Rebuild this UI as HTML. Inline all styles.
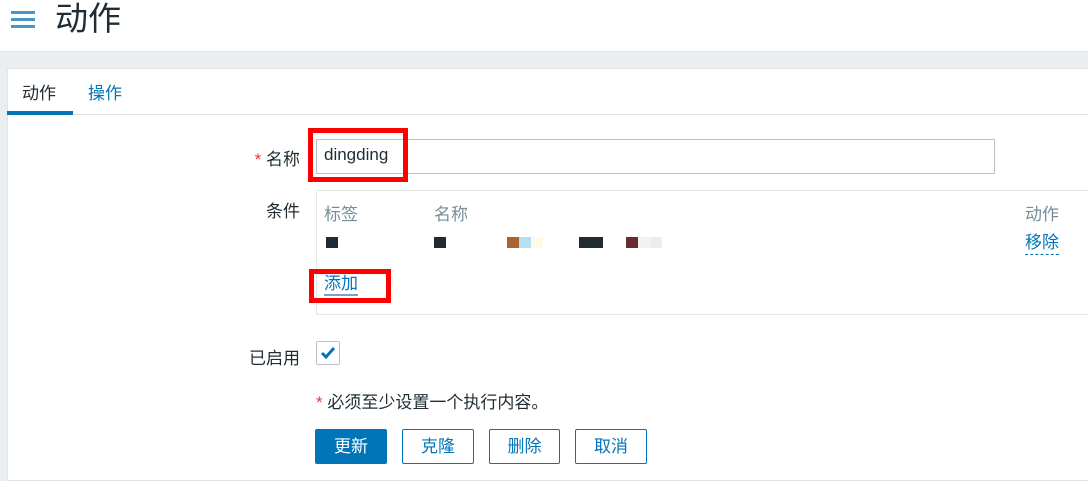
<!DOCTYPE html>
<html><head><meta charset="utf-8"><style>
*{margin:0;padding:0;box-sizing:border-box}
body{width:1088px;height:481px;overflow:hidden;background:#ebeef0;font-family:"Liberation Sans","Noto Sans CJK SC",sans-serif;color:#1f2c33;position:relative}
.a{position:absolute}
.hdr{left:0;top:0;width:1088px;height:52px;background:#fff;border-bottom:1px solid #dfe4e7}
.panel{left:7px;top:68px;width:1081px;height:413px;background:#fff;border:1px solid #dfe4e7;border-right:none}
.lbl{font-size:17px;text-align:right;width:100px}
.btn{top:429px;height:35px;border:1px solid #0275b8;color:#0275b8;font-size:17px;text-align:center;line-height:33px;border-radius:2px;background:#fff}
.red{border:5px solid #f00}
.sq{width:12px;height:11px}
</style></head><body>
<div class="a hdr"></div>
<div class="a" style="left:11px;top:11px;width:24px;height:3px;background:#4796c4"></div>
<div class="a" style="left:11px;top:18px;width:24px;height:3px;background:#4796c4"></div>
<div class="a" style="left:11px;top:25px;width:24px;height:3px;background:#4796c4"></div>
<div class="a" style="left:55px;top:-1px;font-size:33px;line-height:40px">动作</div>
<div class="a panel"></div>
<div class="a" style="left:8px;top:114px;width:1080px;height:1px;background:#dfe4e7"></div>
<div class="a" style="left:7px;top:111px;width:66px;height:4px;background:#0275b8"></div>
<div class="a" style="left:22px;top:79px;font-size:17px">动作</div>
<div class="a" style="left:88px;top:79px;font-size:17px;color:#0275b8">操作</div>

<div class="a lbl" style="left:200px;top:145px"><span style="color:#e33">*</span> 名称</div>
<div class="a" style="left:316px;top:139px;width:679px;height:35px;border:1px solid #b8c3c9"></div>
<div class="a" style="left:324px;top:145px;font-size:17px">dingding</div>
<div class="a red" style="left:308px;top:128px;width:100px;height:54px"></div>

<div class="a lbl" style="left:200px;top:197px">条件</div>
<div class="a" style="left:316px;top:190px;width:772px;height:125px;border:1px solid #e3e7ea;border-right:none"></div>
<div class="a" style="left:324px;top:200px;font-size:17px;color:#768d99">标签</div>
<div class="a" style="left:434px;top:200px;font-size:17px;color:#768d99">名称</div>
<div class="a" style="left:1025px;top:200px;font-size:17px;color:#768d99">动作</div>
<div class="a sq" style="left:326px;top:237px;background:#1f2c33"></div>
<div class="a sq" style="left:434px;top:237px;background:#1f2c33"></div>
<div class="a sq" style="left:507px;top:237px;background:#a86431"></div>
<div class="a sq" style="left:519px;top:237px;background:#b3e0f5"></div>
<div class="a sq" style="left:531px;top:237px;background:#fbfbe8"></div>
<div class="a" style="left:579px;top:237px;width:24px;height:11px;background:#1f2c33"></div>
<div class="a sq" style="left:626px;top:237px;background:#6b2a30"></div>
<div class="a sq" style="left:638px;top:237px;background:#f0f3f0"></div>
<div class="a sq" style="left:650px;top:237px;background:#ececef"></div>
<div class="a" style="left:1025px;top:232px;font-size:17px;color:#0275b8;border-bottom:1px dashed #0275b8;line-height:22px">移除</div>
<div class="a" style="left:324px;top:273px;font-size:17px;color:#0275b8;line-height:21px;border-bottom:2px solid #7f9fc4">添加</div>
<div class="a red" style="left:309px;top:269px;width:82px;height:34px"></div>

<div class="a lbl" style="left:200px;top:344px">已启用</div>
<div class="a" style="left:316px;top:341px;width:24px;height:24px;border:1px solid #b8c3c9;border-radius:2px"></div>
<svg class="a" style="left:318px;top:343px" width="20" height="20"><path d="M4 10 L8 14 L16 5" stroke="#0275b8" stroke-width="3" fill="none"/></svg>
<div class="a" style="left:316px;top:388px;font-size:17px"><span style="color:#e33">*</span> 必须至少设置一个执行内容。</div>
<div class="a btn" style="left:315px;width:72px;background:#0275b8;color:#fff">更新</div>
<div class="a btn" style="left:402px;width:72px">克隆</div>
<div class="a btn" style="left:489px;width:71px">删除</div>
<div class="a btn" style="left:575px;width:72px">取消</div>
</body></html>
